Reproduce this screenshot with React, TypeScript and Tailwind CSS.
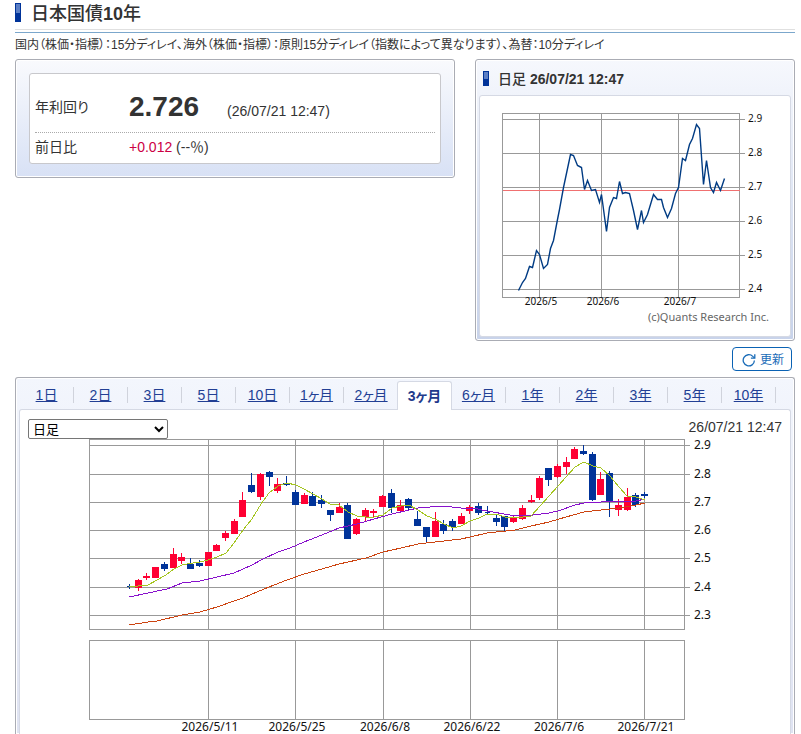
import { useState } from 'react'

type Candle = [kind: 'u' | 'd', high: number, top: number, bottom: number, low: number]

const TABS = ['1日', '2日', '3日', '5日', '10日', '1ヶ月', '2ヶ月', '3ヶ月', '6ヶ月', '1年', '2年', '3年', '5年', '10年']

// u = 陽線, d = 陰線 (plot coordinates)
const CANDLES: Candle[] = [
  ['d', 145, 147, 148, 150],
  ['u', 140, 141, 149, 152],
  ['u', 134, 137, 139, 141],
  ['u', 128, 128, 139, 139],
  ['d', 123, 125, 130, 132],
  ['u', 109, 115, 129, 129],
  ['u', 114, 118, 122, 125],
  ['d', 119, 125, 130, 130],
  ['d', 121, 124, 127, 128],
  ['u', 113, 113, 127, 127],
  ['u', 105, 106, 112, 112],
  ['u', 92, 94, 99, 102],
  ['u', 80, 82, 95, 95],
  ['u', 53, 61, 78, 78],
  ['d', 34, 46, 53, 54],
  ['u', 34, 35, 58, 61],
  ['d', 32, 33, 38, 47],
  ['u', 39, 45, 52, 54],
  ['d', 37, 44, 46, 47],
  ['d', 51, 53, 66, 66],
  ['u', 54, 56, 65, 65],
  ['d', 53, 57, 67, 67],
  ['d', 56, 61, 65, 69],
  ['d', 71, 71, 76, 82],
  ['u', 64, 68, 74, 74],
  ['d', 64, 66, 100, 100],
  ['u', 79, 80, 95, 96],
  ['u', 69, 71, 78, 83],
  ['u', 70, 72, 74, 78],
  ['u', 56, 57, 68, 68],
  ['d', 50, 54, 69, 74],
  ['u', 61, 66, 72, 73],
  ['d', 59, 60, 69, 71],
  ['d', 72, 80, 87, 87],
  ['d', 88, 88, 98, 104],
  ['u', 73, 82, 98, 98],
  ['d', 81, 85, 92, 95],
  ['d', 80, 82, 88, 92],
  ['u', 74, 77, 85, 85],
  ['u', 66, 68, 72, 75],
  ['d', 64, 67, 74, 76],
  ['d', 67, 73, 74, 75],
  ['d', 76, 79, 83, 87],
  ['d', 77, 77, 88, 93],
  ['u', 77, 79, 83, 84],
  ['u', 66, 69, 80, 81],
  ['u', 56, 61, 63, 64],
  ['u', 37, 39, 59, 61],
  ['d', 29, 29, 41, 47],
  ['u', 25, 27, 38, 39],
  ['u', 18, 23, 28, 35],
  ['u', 8, 10, 20, 20],
  ['d', 6, 12, 15, 16],
  ['d', 13, 15, 61, 62],
  ['u', 33, 40, 56, 56],
  ['d', 32, 34, 63, 78],
  ['u', 60, 66, 71, 77],
  ['u', 49, 58, 71, 72],
  ['d', 54, 56, 66, 68],
  ['d', 53, 55, 57, 59],
]

const MA_SHORT =
  '40,148 59,146 68,141 77,136 85,130 93,126 104,124 111,123 119,121 128,118 137,114 145,104 154,91 163,80 172,65 180,54 189,47 198,44 207,46 215,50 224,55 233,60 241,65 250,66 259,73 268,77 277,78 285,78 294,76 303,69 312,67 320,66 329,71 338,77 346,80 355,85 364,89 372,87 381,82 390,79 398,75 407,75 416,78 425,79 434,78 442,77 451,67 460,57 469,47 477,38 486,28 495,23 504,27 512,29 521,37 530,48 538,57 547,58 556,61'
const MA_MIDDLE =
  '40,158 59,154 78,150 93,144 111,142 128,138 145,134 154,130 163,126 172,121 189,113 201,109 215,103 233,96 250,89 268,85 285,80 303,75 320,71 329,69 341,68 354,67 372,69 384,69 398,72 421,76 444,76 460,74 469,72 486,66 495,64 512,63 530,62 547,62 556,60'
const MA_LONG =
  '40,186 59,183 68,182 93,176 111,173 128,168 145,162 154,159 163,155 180,148 198,141 215,135 233,130 250,125 259,123 277,119 294,113 312,109 329,105 346,103 372,100 381,98 398,94 426,91 442,87 460,83 477,78 495,73 512,71 530,69 547,66 556,64'

const DAILY =
  '16,177 20,169 23,165 27,153 30,154 34,137 37,141 41,155 45,151 48,135 51,127 55,106 57,96 61,74 68,41 71,42 75,52 79,54 82,76 85,67 89,77 93,76 97,89 99,81 104,118 107,94 111,84 114,85 117,68 120,80 123,79 127,80 131,97 135,116 139,97 141,109 145,101 151,81 155,86 159,86 161,94 165,104 169,95 173,80 176,74 180,45 183,47 187,31 190,25 194,11 197,15 201,71 204,47 208,74 211,79 214,69 218,77 222,65'

const PRICE_LINES: [string, number][] = [
  ['2.9', 6], ['2.8', 35], ['2.7', 63], ['2.6', 91], ['2.5', 119], ['2.4', 148], ['2.3', 176],
]
const DATE_LINES: [string, number][] = [
  ['2026/5/11', 119], ['2026/5/25', 206], ['2026/6/8', 294], ['2026/6/22', 381], ['2026/7/6', 468], ['2026/7/21', 555],
]
const SMALL_PRICES: [string, number][] = [
  ['2.9', 6], ['2.8', 40], ['2.7', 74], ['2.6', 108], ['2.5', 142], ['2.4', 176],
]
const SMALL_DATES: [string, number][] = [['2026/5', 37], ['2026/6', 99], ['2026/7', 176]]

function Marker({ className }: { className: string }) {
  return (
    <span className={`flex w-[6px] flex-col border border-[#003399] bg-[#003399] ${className}`}>
      <span className="h-1/2 bg-[#5c7fc4]" />
    </span>
  )
}

function SmallChart() {
  return (
    <svg width="288" height="216" className="block overflow-visible font-['Noto_Sans',sans-serif]" role="img" aria-label="日足チャート">
      <g fill="none" stroke="#999" shapeRendering="crispEdges" transform="translate(.5 .5)">
        <rect x="0" y="0" width="237" height="184" />
        {SMALL_PRICES.map(([label, y]) => <path key={label} d={`M0 ${y}H242`} />)}
        {SMALL_DATES.map(([label, x]) => <path key={label} d={`M${x} 0V184`} />)}
        <path d="M0 77H237" stroke="#f07070" />
        <polyline points={DAILY} stroke="#003b83" strokeWidth="1.4" shapeRendering="auto" />
      </g>
      <g fontSize="10" fill="#111">
        {SMALL_PRICES.map(([label, y]) => <text key={label} x="246" y={y + 3}>{label}</text>)}
        {SMALL_DATES.map(([label, x]) => <text key={label} x={x + 2} y="192" textAnchor="middle">{label}</text>)}
      </g>
      <text x="267" y="208" fontSize="11" fill="#666" textAnchor="end">(c)Quants Research Inc.</text>
    </svg>
  )
}

function CandleChart() {
  return (
    <svg width="680" height="295" className="ml-[69px] block overflow-visible font-['Noto_Sans',sans-serif]" role="img" aria-label="3ヶ月チャート">
      <g fill="none" stroke="#999" shapeRendering="crispEdges" transform="translate(.5 .5)">
        <rect x="0" y="0" width="595" height="190" />
        <rect x="0" y="201" width="595" height="79" />
        {PRICE_LINES.map(([label, y]) => <path key={label} d={`M0 ${y}H600`} />)}
        {DATE_LINES.map(([label, x]) => <path key={label} d={`M${x} 0V190M${x} 201V280`} />)}
      </g>
      <g shapeRendering="crispEdges">
        {CANDLES.map(([kind, high, top, bottom, low], i) => {
          const x = Math.round(40 + i * 8.73)
          // doji are drawn narrower than full bodies
          const half = bottom - top > 1 ? 3 : 2
          return (
            <g key={i} fill={kind === 'u' ? '#ff0033' : '#003399'}>
              <rect x={x} y={high} width="1" height={low - high} />
              <rect x={x - half} y={top} width={half * 2 + 1} height={bottom - top} />
            </g>
          )
        })}
      </g>
      <g fill="none" shapeRendering="crispEdges">
        <polyline points={MA_LONG} stroke="#cc4411" />
        <polyline points={MA_MIDDLE} stroke="#8811cc" />
        <polyline points={MA_SHORT} stroke="#a5c520" />
      </g>
      <g fontSize="12" fill="#111">
        {PRICE_LINES.map(([label, y]) => <text key={label} x="605" y={y + 4}>{label}</text>)}
        {DATE_LINES.map(([label, x]) => <text key={label} x={x + 2} y="292" textAnchor="middle">{label}</text>)}
      </g>
    </svg>
  )
}

export default function App() {
  const [span, setSpan] = useState('daily')

  return (
    <div className="bg-white pr-[6px] pl-[15px] font-['Liberation_Sans','Noto_Sans_CJK_JP',sans-serif] text-sm leading-5 text-[#333] [font-feature-settings:'palt']">
      <header className="border-b border-[#7ba7cc] pb-[2px]">
        <div className="flex h-[30px] items-start border-b border-[#e0e0e0]">
          <Marker className="mt-[3px] mr-[10px] h-[19px]" />
          <h1 className="text-lg leading-7 font-medium">
            日本国債<span className="font-bold">10</span>年
          </h1>
        </div>
      </header>
      <p className="mt-[2px] text-xs leading-5">
        国内（株価・指標）：15分ディレイ、海外（株価・指標）：原則15分ディレイ（指数によって異なります）、為替：10分ディレイ
      </p>

      <div className="mt-1 flex items-start gap-5">
        <section className="flex-1 rounded-[3px] border border-[#aaacb4] bg-linear-to-b from-[#f9fafd] to-[#d8e1f5] p-[13px] shadow-[inset_0_0_0_1px_#fff]">
          <dl className="rounded-[3px] border border-[#c8c8cc] bg-white px-[5px]">
            <div className="flex h-[59px] items-center border-b border-dotted border-[#aaa] pt-[7px]">
              <dt className="w-[94px]">年利回り</dt>
              <dd className="flex items-baseline gap-[28px]">
                <strong className="text-[28px] leading-8">2.726</strong>
                <span>(26/07/21 12:47)</span>
              </dd>
            </div>
            <div className="flex h-[30px] items-center pb-[2px]">
              <dt className="w-[94px]">前日比</dt>
              <dd><span className="text-[#cc0044]">+0.012</span> (--％)</dd>
            </div>
          </dl>
        </section>

        <section className="w-[320px] rounded-[3px] border border-[#aaacb4] bg-linear-to-b from-[#f6f8fd] to-[#c8d3ea] p-[3px] shadow-[inset_0_0_0_1px_#fff]">
          <div className="flex h-8 items-center pb-px pl-1">
            <Marker className="mr-[9px] h-[15px]" />
            <h2 className="font-medium">
              日足 <span className="font-bold">26/07/21 12:47</span>
            </h2>
          </div>
          <div className="rounded-[3px] border border-[#d5d9e4] bg-white pt-[17px] pb-[7px] pl-[22px]">
            <SmallChart />
          </div>
        </section>
      </div>

      <div className="mt-[6px] flex justify-end pr-[3px]">
        <button type="button" className="flex h-6 w-[60px] items-center justify-center gap-1 rounded border border-[#0a62b4] bg-white pt-px pl-[2px] text-xs text-[#1a6cb8]">
          <svg width="14" height="14" viewBox="0 0 14 14" fill="none" stroke="currentColor" strokeWidth="1.3" aria-hidden="true">
            <path d="M12.4 7.5A5.6 5.6 0 1 1 10.8 3.4L12.6 5" />
            <path d="M12.8 1.3V5.2H8.9" />
          </svg>
          更新
        </button>
      </div>

      <section className="mt-[6px] rounded-t-[3px] border border-b-0 border-[#aaacb4] bg-linear-to-b from-[#f3f6fd] to-[#dfe3f2] px-[3px] pt-[3px] shadow-[inset_0_0_0_1px_#fff]">
        <nav className="flex h-7 items-stretch pl-px">
          {TABS.map((tab) =>
            tab === '3ヶ月' ? (
              <strong key={tab} className="z-10 -mb-px -ml-px flex w-[55px] items-center justify-center rounded-t-[3px] border border-b-0 border-[#d5d9e4] bg-white text-[#223a8c]">
                {tab}
              </strong>
            ) : (
              <span key={tab} className="flex w-[54px] items-center">
                <a href="#" className="flex-1 text-center text-[#223f94] underline">{tab}</a>
                {tab !== '2ヶ月' && <span className="h-4 w-px bg-[#d0d3dc]" />}
              </span>
            ),
          )}
        </nav>
        <div className="rounded-t-[3px] border border-b-0 border-[#d5d9e4] bg-white pt-[9px]">
          <div className="flex items-start justify-between px-2">
            <select
              aria-label="足種"
              value={span}
              onChange={(e) => setSpan(e.target.value)}
              className="h-5 w-[140px] rounded-[2px] border border-[#767676] bg-white text-[13px] leading-4 text-black"
            >
              <option value="daily">日足</option>
              <option value="weekly">週足</option>
            </select>
            <time className="h-5 leading-4">26/07/21 12:47</time>
          </div>
          <CandleChart />
        </div>
      </section>
    </div>
  )
}
